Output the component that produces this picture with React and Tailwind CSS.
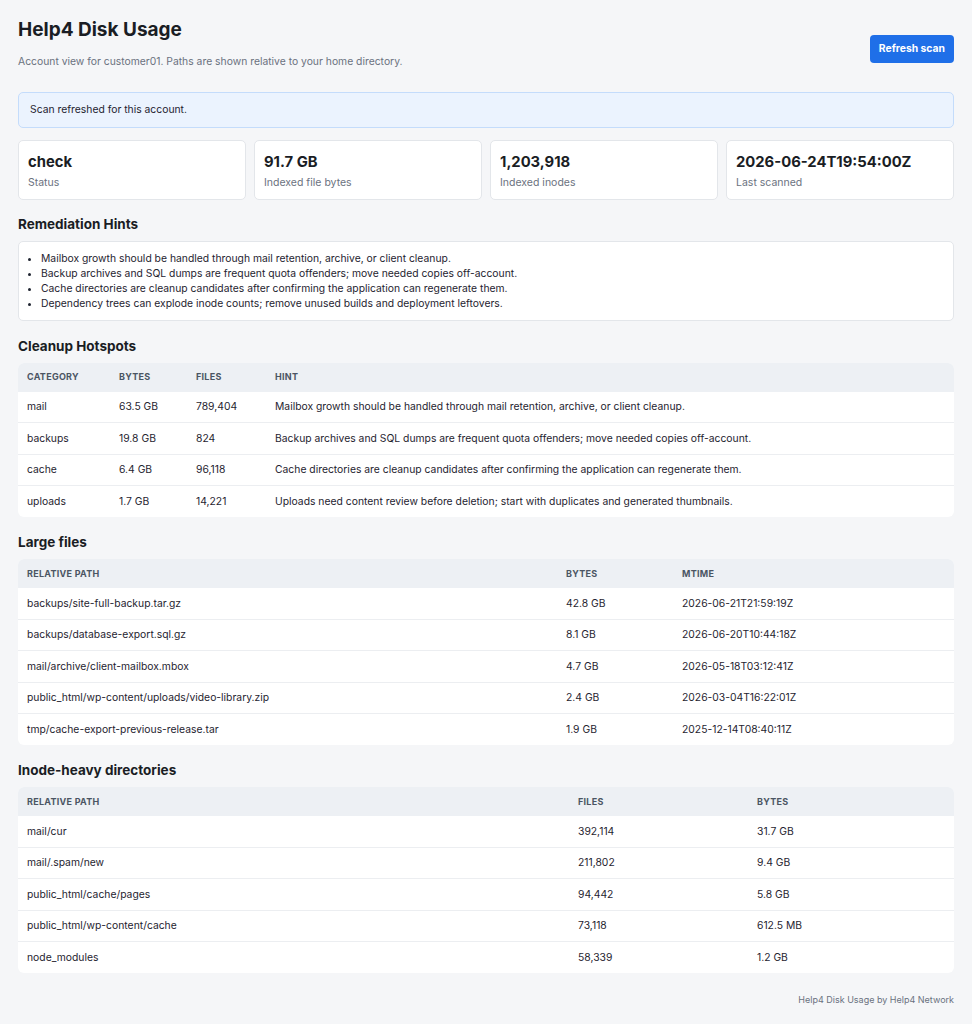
import React from "react";

const stats = [
    { value: "check", label: "Status" },
    { value: "91.7 GB", label: "Indexed file bytes" },
    { value: "1,203,918", label: "Indexed inodes" },
    { value: "2026-06-24T19:54:00Z", label: "Last scanned" },
];

const hints = [
    "Mailbox growth should be handled through mail retention, archive, or client cleanup.",
    "Backup archives and SQL dumps are frequent quota offenders; move needed copies off-account.",
    "Cache directories are cleanup candidates after confirming the application can regenerate them.",
    "Dependency trees can explode inode counts; remove unused builds and deployment leftovers.",
];

const hotspots = [
    ["mail", "63.5 GB", "789,404", hints[0]],
    ["backups", "19.8 GB", "824", hints[1]],
    ["cache", "6.4 GB", "96,118", hints[2]],
    ["uploads", "1.7 GB", "14,221", "Uploads need content review before deletion; start with duplicates and generated thumbnails."],
];

const largeFiles = [
    ["backups/site-full-backup.tar.gz", "42.8 GB", "2026-06-21T21:59:19Z"],
    ["backups/database-export.sql.gz", "8.1 GB", "2026-06-20T10:44:18Z"],
    ["mail/archive/client-mailbox.mbox", "4.7 GB", "2026-05-18T03:12:41Z"],
    ["public_html/wp-content/uploads/video-library.zip", "2.4 GB", "2026-03-04T16:22:01Z"],
    ["tmp/cache-export-previous-release.tar", "1.9 GB", "2025-12-14T08:40:11Z"],
];

const inodeDirs = [
    ["mail/cur", "392,114", "31.7 GB"],
    ["mail/.spam/new", "211,802", "9.4 GB"],
    ["public_html/cache/pages", "94,442", "5.8 GB"],
    ["public_html/wp-content/cache", "73,118", "612.5 MB"],
    ["node_modules", "58,339", "1.2 GB"],
];

const DataTable = ({ columns, widths, rows }) => (
    <div className="bg-white rounded-md overflow-hidden">
        <table className="w-full table-fixed border-collapse text-left">
            <colgroup>
                {widths.map((w, i) => (
                    <col key={i} style={{ width: w }} />
                ))}
            </colgroup>
            <thead>
                <tr className="bg-[#edf0f4] h-[29px]">
                    {columns.map((c) => (
                        <th key={c} className="px-[9px] text-[9px] font-bold uppercase tracking-[0.03em] text-[#4b5563]">
                            {c}
                        </th>
                    ))}
                </tr>
            </thead>
            <tbody>
                {rows.map((row, i) => (
                    <tr key={i} className={`h-[31.4px] ${i > 0 ? "border-t border-[#eceef1]" : ""}`}>
                        {row.map((cell, j) => (
                            <td key={j} className="px-[9px] text-[10.35px] text-[#1f2430] whitespace-nowrap">
                                {cell}
                            </td>
                        ))}
                    </tr>
                ))}
            </tbody>
        </table>
    </div>
);

const SectionTitle = ({ children }) => (
    <h2 className="text-[13.5px] leading-[20px] font-bold text-[#1a1d24] mb-[7px]">{children}</h2>
);

const App = () => {
    return (
        <div className="min-h-screen bg-[#f5f6f8] px-[18px] pt-[18px] pb-[14px] font-['Inter',sans-serif]">
            <div className="flex items-start justify-between">
                <div>
                    <h1 className="text-[19px] font-bold text-[#1a1d24] leading-[24px]">Help4 Disk Usage</h1>
                    <p className="mt-[12px] text-[10.35px] text-[#6b7280]">
                        Account view for customer01. Paths are shown relative to your home directory.
                    </p>
                </div>
                <button className="mt-[17px] h-[28px] px-[9px] rounded-[4px] bg-[#1f6fe8] text-white text-[10.35px] font-bold">
                    Refresh scan
                </button>
            </div>

            <div className="mt-[22px] h-[36px] flex items-center px-[11px] rounded-[5px] bg-[#ebf3fe] border border-[#c4dcfb] text-[10.35px] text-[#1f2430]">
                Scan refreshed for this account.
            </div>

            <div className="mt-[12px] grid grid-cols-4 gap-[8px]">
                {stats.map((s) => (
                    <div key={s.label} className="bg-white border border-[#e3e6ea] rounded-[5px] h-[60px] px-[9px] pt-[12px]">
                        <div className="text-[14.8px] font-bold text-[#1a1d24] leading-[18px]">{s.value}</div>
                        <div className="mt-[4px] text-[10.5px] text-[#6b7280]">{s.label}</div>
                    </div>
                ))}
            </div>

            <div className="mt-[14px]">
                <SectionTitle>Remediation Hints</SectionTitle>
                <div className="bg-white border border-[#e3e6ea] rounded-[5px] pl-[22px] pr-[10px] py-[9px]">
                    <ul className="list-disc text-[10.35px] leading-[15px] text-[#1f2430]">
                        {hints.map((h) => (
                            <li key={h}>{h}</li>
                        ))}
                    </ul>
                </div>
            </div>

            <div className="mt-[15px]">
                <SectionTitle>Cleanup Hotspots</SectionTitle>
                <DataTable columns={["Category", "Bytes", "Files", "Hint"]} widths={["92px", "77px", "79px", "auto"]} rows={hotspots} />
            </div>

            <div className="mt-[15px]">
                <SectionTitle>Large files</SectionTitle>
                <DataTable columns={["Relative path", "Bytes", "Mtime"]} widths={["539px", "116px", "auto"]} rows={largeFiles} />
            </div>

            <div className="mt-[15px]">
                <SectionTitle>Inode-heavy directories</SectionTitle>
                <DataTable columns={["Relative path", "Files", "Bytes"]} widths={["551px", "179px", "auto"]} rows={inodeDirs} />
            </div>

            <div className="mt-[20px] text-right text-[9px] text-[#6b7280]">Help4 Disk Usage by Help4 Network</div>
        </div>
    );
};

export default App;
